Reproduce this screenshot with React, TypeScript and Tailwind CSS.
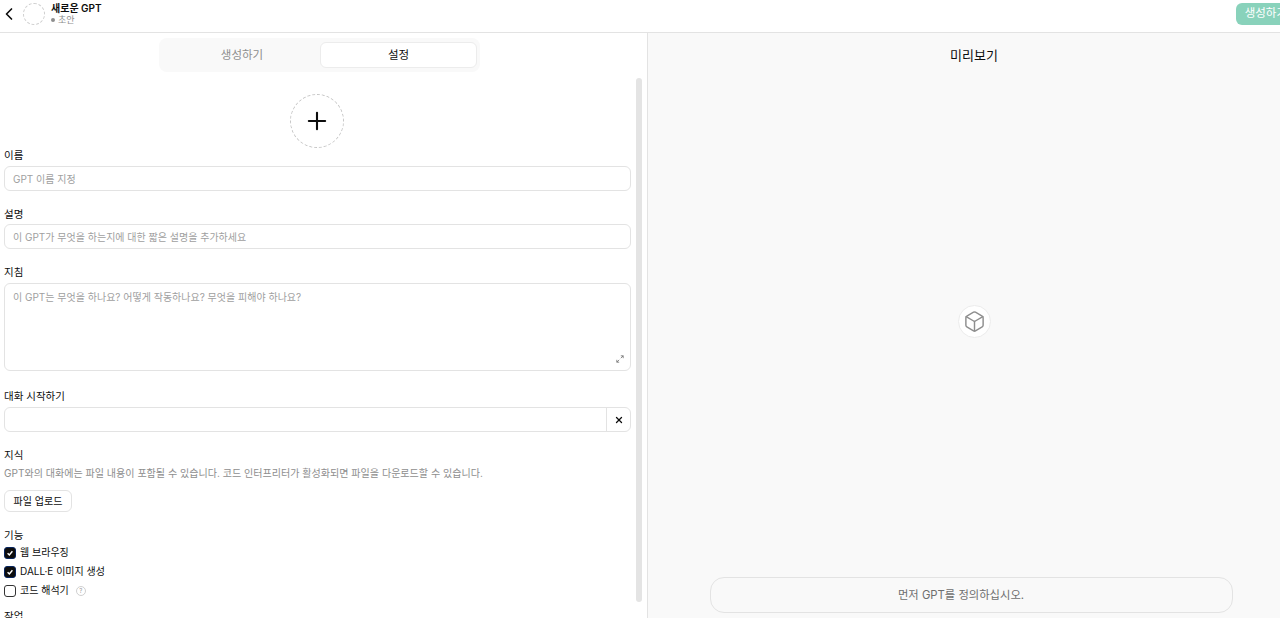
import { Box, ChevronLeft, Plus, X } from 'lucide-react';

const fontStack = 'font-["Inter","Noto_Sans_CJK_KR",sans-serif]';

function Label({ children }: { children: React.ReactNode }) {
    return <div className="text-[10.5px] leading-[14px] text-[#0d0d0d]">{children}</div>;
}

function Field({ label, placeholder, tight }: { label: string; placeholder: string; tight?: boolean }) {
    return (
        <div className={tight ? 'flex flex-col gap-[2px]' : 'flex flex-col gap-[3px]'}>
            <Label>{label}</Label>
            <div className="flex h-[25px] items-center rounded-[6px] border border-[#e3e3e3] px-[8px] pt-[1px] text-[10px] text-[#a0a0a0]">
                {placeholder}
            </div>
        </div>
    );
}

function Feature({ label, checked, help }: { label: string; checked?: boolean; help?: boolean }) {
    return (
        <div className="flex h-[19px] items-center gap-[4px] text-[10px] text-[#0d0d0d]">
            {checked ? (
                <span className="flex h-[12px] w-[12px] items-center justify-center rounded-[3px] border border-[#06245e] bg-[#0d0d0d]">
                    <svg viewBox="0 0 10 10" className="h-[8px] w-[8px]" fill="none" stroke="#fff" strokeWidth="1.8">
                        <path d="M2 5.2 4.2 7.4 8 2.8" />
                    </svg>
                </span>
            ) : (
                <span className="h-[12px] w-[12px] rounded-[3px] border border-[#333333]" />
            )}
            <span>{label}</span>
            {help && (
                <span className="ml-[3px] flex h-[10px] w-[10px] items-center justify-center rounded-full border border-[#d0d0d0] text-[6px] leading-none text-[#a0a0a0]">
                    ?
                </span>
            )}
        </div>
    );
}

export default function App() {
    return (
        <div className={`flex h-[618px] w-[1280px] flex-col overflow-hidden bg-white ${fontStack}`}>
            <header className="flex h-[33px] shrink-0 items-center justify-between border-b border-[#e3e3e3] pb-[5px]">
                <div className="flex items-center">
                    <ChevronLeft className="-ml-[1px] h-[20px] w-[20px] text-[#0d0d0d]" strokeWidth={2} />
                    <div className="ml-[4px] h-[22px] w-[22px] rounded-full border border-dashed border-[#cfcfcf]" />
                    <div className="ml-[6px] flex flex-col">
                        <div className="text-[10px] leading-[12px] font-semibold text-[#0d0d0d]">새로운 GPT</div>
                        <div className="flex items-center gap-[3px] text-[9px] leading-[11px] text-[#8e8e8e]">
                            <span className="h-[4px] w-[4px] rounded-full bg-[#8e8e8e]" />
                            초안
                        </div>
                    </div>
                </div>
                <button className="mr-[-16px] flex h-[22px] shrink-0 items-center justify-center rounded-[6px] bg-[#89d2bb] px-[9px] text-[11.5px] whitespace-nowrap text-white">
                    생성하기
                </button>
            </header>

            <div className="flex min-h-0 flex-1">
                <section className="relative w-[648px] shrink-0 overflow-hidden border-r border-[#e3e3e3]">
                    <div className="flex justify-center pt-[5px] pr-[8px]">
                        <div className="flex h-[34px] w-[321px] items-center rounded-[8px] bg-[#f9f9f9] pr-[3px] pl-[5px]">
                            <div className="flex-1 pt-[1px] text-center text-[11.5px] text-[#8e8e8e]">생성하기</div>
                            <div className="flex h-[26px] w-[157px] items-center justify-center rounded-[6px] border border-[#ececec] bg-white pt-[1px] text-[11.5px] text-[#0d0d0d]">
                                설정
                            </div>
                        </div>
                    </div>

                    <div className="flex justify-center pt-[22px] pr-[13px]">
                        <div className="flex h-[54px] w-[54px] items-center justify-center rounded-full border border-dashed border-[#c4c4c4]">
                            <Plus className="h-[28px] w-[28px] text-[#0d0d0d]" strokeWidth={1.8} />
                        </div>
                    </div>

                    <div className="mt-[1px] mr-[16px] ml-[4px] flex flex-col">
                        <Field label="이름" placeholder="GPT 이름 지정" />
                        <div className="mt-[17px]">
                            <Field tight label="설명" placeholder="이 GPT가 무엇을 하는지에 대한 짧은 설명을 추가하세요" />
                        </div>
                        <div className="mt-[17px] flex flex-col gap-[3px]">
                            <Label>지침</Label>
                            <div className="relative h-[88px] rounded-[6px] border border-[#e3e3e3] px-[8px] py-[6px] text-[10px] text-[#a0a0a0]">
                                이 GPT는 무엇을 하나요? 어떻게 작동하나요? 무엇을 피해야 하나요?
                                <svg viewBox="0 0 10 10" className="absolute right-[6px] bottom-[7px] h-[8px] w-[8px]" fill="none" stroke="#6e6e6e" strokeWidth="1">
                                    <path d="M6 1h3v3M9 1 6 4M4 9H1V6M1 9l3-3" />
                                </svg>
                            </div>
                        </div>
                        <div className="mt-[19px] flex flex-col gap-[3px]">
                            <Label>대화 시작하기</Label>
                            <div className="flex h-[25px] rounded-[6px] border border-[#e3e3e3]">
                                <div className="flex-1" />
                                <div className="flex w-[24px] items-center justify-center border-l border-[#e3e3e3]">
                                    <X className="h-[10px] w-[10px] text-[#0d0d0d]" strokeWidth={3} />
                                </div>
                            </div>
                        </div>
                        <div className="mt-[17px]">
                            <Label>지식</Label>
                            <div className="mt-[3px] text-[10.05px] leading-[14px] text-[#8e8e8e]">
                                GPT와의 대화에는 파일 내용이 포함될 수 있습니다. 코드 인터프리터가 활성화되면 파일을 다운로드할 수 있습니다.
                            </div>
                            <button className="mt-[10px] flex h-[22px] w-[68px] items-center justify-center rounded-[6px] border border-[#e3e3e3] text-[10px] text-[#0d0d0d]">
                                파일 업로드
                            </button>
                        </div>
                        <div className="mt-[17px]">
                            <Label>기능</Label>
                            <div className="flex flex-col">
                                <Feature label="웹 브라우징" checked />
                                <Feature label="DALL·E 이미지 생성" checked />
                                <Feature label="코드 해석기" help />
                            </div>
                        </div>
                        <div className="mt-[10px]">
                            <Label>작업</Label>
                        </div>
                    </div>

                    {/* scrollbar sits over the form */}
                    <div className="absolute top-[45px] right-[5px] h-[524px] w-[6px] rounded-[3px] bg-[#e4e4e4]" />
                </section>

                <section className="flex min-w-0 flex-1 flex-col items-center bg-[#f9f9f9] pl-[20px]">
                    <div className="pt-[13px] text-[13px] leading-[18px] text-[#0d0d0d]">미리보기</div>
                    <div className="flex flex-1 items-center justify-center pt-[2px]">
                        <div className="flex h-[33px] w-[33px] items-center justify-center rounded-full border border-[#ececec] bg-white">
                            <Box className="h-[23px] w-[23px] text-[#8e8e8e]" strokeWidth={1.5} />
                        </div>
                    </div>
                    <div className="mr-[5px] mb-[5px] flex h-[36px] w-[523px] items-center justify-center rounded-[14px] border border-[#e3e3e3] pr-[21px] text-[11.3px] text-[#6e6e6e]">
                        먼저 GPT를 정의하십시오.
                    </div>
                </section>
            </div>
        </div>
    );
}
